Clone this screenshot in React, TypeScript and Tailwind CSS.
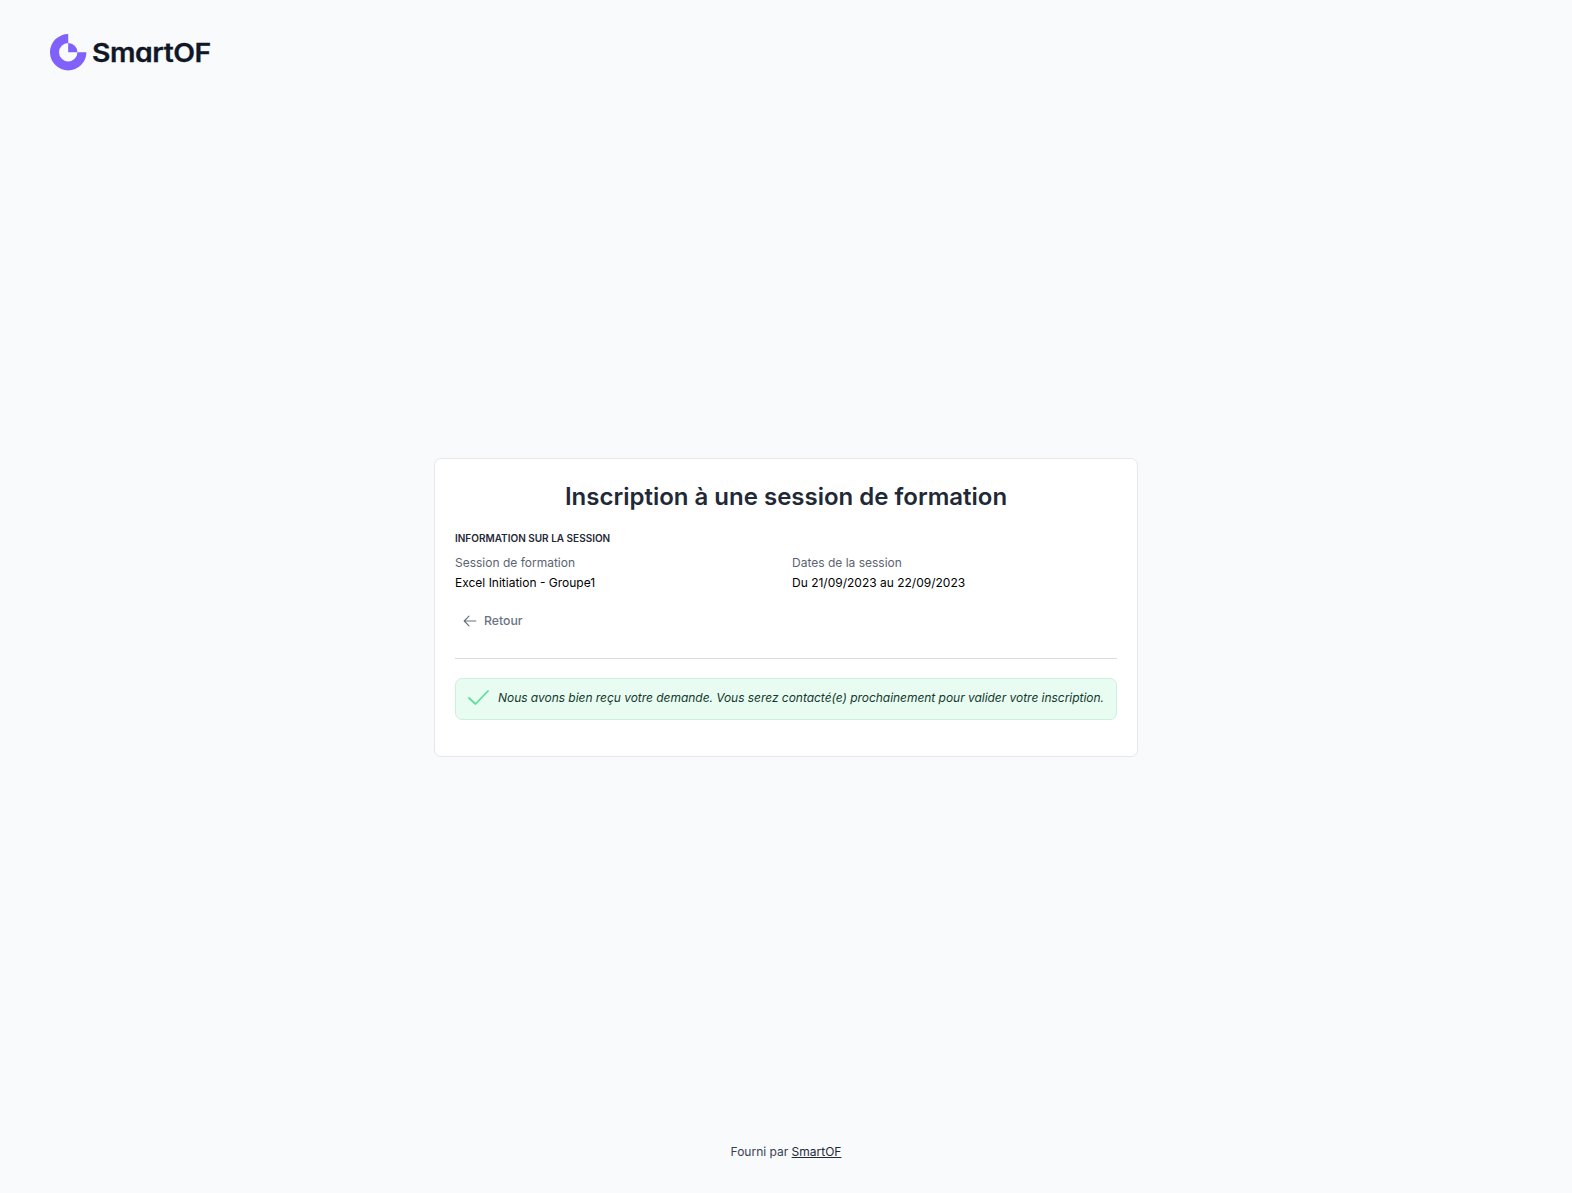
import type { ReactNode } from "react"

const SESSION = [
  { label: 'Session de formation', value: 'Excel Initiation - Groupe1' },
  { label: 'Dates de la session', value: 'Du 21/09/2023 au 22/09/2023' },
]

function Logo() {
  return (
    <div className="flex items-center">
      <svg className="h-10 w-[37px]" viewBox="0 0 37 40" aria-hidden="true">
        <path d="M18.2 2a18.2 18.2 0 1 0 18.2 18.2H27.4A9.2 9.2 0 1 1 18.2 11Z" fill="#8061fa" />
        <path d="M18.2 11a9.1 9.1 0 0 1 9.2 9.2H18.2Z" fill="#8061fa" />
      </svg>
      <span className="mt-px ml-[5px] origin-left scale-x-[1.09] text-[26px] leading-[38px] font-semibold tracking-[-0.4px] text-[#101828] [font-feature-settings:'cv11'] [-webkit-text-stroke:0.3px_#101828]">
        SmartOF
      </span>
    </div>
  )
}

function Field({ label, value }: { label: string; value: ReactNode }) {
  return (
    <div className="flex-1">
      <p className="text-[#5b6470]">{label}</p>
      <p className="text-black">{value}</p>
    </div>
  )
}

export default function App() {
  return (
    <div className="flex h-[1193px] flex-col bg-[#f9fafc] [font-family:Inter,sans-serif] text-xs leading-5">
      <header className="h-[104px] shrink-0 pt-8 pl-[50px]">
        <Logo />
      </header>

      <main className="flex flex-1 flex-col items-center pt-[354px]">
        <section className="h-[299px] w-[704px] rounded-[7px] border border-[#e5e7eb] bg-white px-5 pt-[22px]">
          <h1 className="text-center text-2xl font-semibold text-[#1f2937]">
            Inscription à une session de formation
          </h1>
          <h2 className="mt-[17px] text-[10px] leading-4 font-semibold text-[#1f2937] uppercase">
            Information sur la session
          </h2>
          <div className="mt-[7px] flex gap-3">
            {SESSION.map((item) => (
              <Field key={item.label} label={item.label} value={item.value} />
            ))}
          </div>

          <button type="button" className="mt-[18px] flex items-center gap-[7px] pl-2 text-[12.25px] font-medium text-[#6b7280]">
            <svg className="h-[14px] w-[14px]" viewBox="0 0 14 14" fill="none" stroke="currentColor" strokeWidth="1.2" strokeLinecap="round" strokeLinejoin="round">
              <path d="M12.8 7H1.2M6 2.2 1.2 7 6 11.8" />
            </svg>
            Retour
          </button>

          <div className="mt-[27px] border-t border-[#d9dce1]" />

          {/* confirmation */}
          <div className="mt-[19px] flex h-[42px] items-center rounded-[7px] border border-[#c9f2de] bg-[#e8fcf2] pb-0.5 pl-3 text-[#14382b] italic">
            <svg className="mr-[9px] h-4 w-[21px] shrink-0" viewBox="0 0 21 16" fill="none" stroke="#5be09c" strokeWidth="1.8" strokeLinecap="round" strokeLinejoin="round">
              <path d="m1 8 6.5 6L20 1" />
            </svg>
            <p className="tracking-[-0.035px] whitespace-nowrap">
              Nous avons bien reçu votre demande. Vous serez contacté(e) prochainement pour valider votre inscription.
            </p>
          </div>
        </section>
      </main>

      <footer className="h-[51px] shrink-0 text-center text-[#374151]">
        Fourni par <a href="#" className="underline text-[#1f2937]">SmartOF</a>
      </footer>
    </div>
  )
}
